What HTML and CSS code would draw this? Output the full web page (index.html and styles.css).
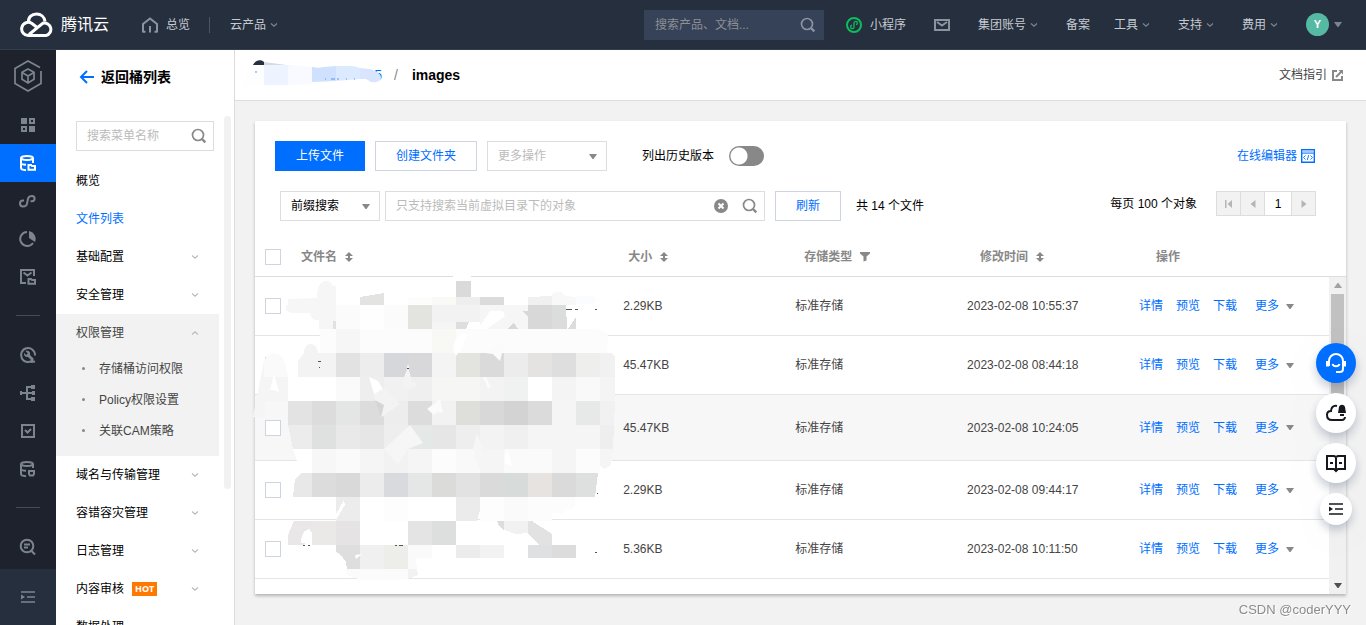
FILE: index.html
```html
<!DOCTYPE html>
<html lang="zh-CN">
<head>
<meta charset="utf-8">
<meta name="viewport" content="width=device-width, initial-scale=1">
<title>images - 文件列表</title>
<link rel="stylesheet" href="styles.css">
</head>
<body>
<svg class="defs" aria-hidden="true">
  <symbol id="chev" viewBox="0 0 16 16"><path d="M5 6.500l3 2.600 3-2.600" fill="none" stroke="currentColor" stroke-width="1.200"/></symbol>
  <symbol id="tri" viewBox="0 0 8 5"><path d="M0 0h8L4.500 5h-1z" fill="currentColor"/></symbol>
  <symbol id="mag" viewBox="0 0 16 16"><circle cx="7" cy="7" r="5.500" fill="none" stroke="currentColor" stroke-width="1.700"/><path d="M11 11l3.300 3.300" stroke="currentColor" stroke-width="2.400"/></symbol>
  <symbol id="sort" viewBox="0 0 8 10"><path d="M4 0l4 4H5v2h3l-4 4-4-4h3V4H0z" fill="currentColor"/></symbol>
  <symbol id="indent" viewBox="0 0 16 16"><path d="M1 3h14M7 8h8M1 13h14" stroke="currentColor" stroke-width="1.600"/><path d="M1 5.500L5 8l-4 2.500z" fill="currentColor"/></symbol>
</svg>

<header class="top">
  <a class="brand" href="#">
    <svg width="34" height="26" viewBox="0 0 34 26" fill="none" stroke="#fff" stroke-width="3"><path d="M9 22.500L23 11.200A6.300 6.300 0 1 1 26 23.500H9A6.600 6.600 0 1 1 12 11.500l4.500 3.500"/><path d="M8.500 10.500C8 5 12 2 16.500 2s8 3 8.500 7.500"/></svg>
    <span>腾讯云</span>
  </a>
  <a class="top-home" href="#">
    <svg width="16" height="16" viewBox="0 0 16 16" fill="none" stroke="#8a939e" stroke-width="2"><path d="M1 15.500V7L8 1.500 15 7v8.500M8 9v6.500M1 14.700h2.500M12.500 14.700H15"/></svg>
    <span>总览</span>
  </a>
  <a class="top-prod" href="#">云产品<svg class="dim" width="16" height="16"><use href="#chev"/></svg></a>
  <div class="top-search">
    <input type="text" aria-label="搜索产品" placeholder="搜索产品、文档...">
    <svg width="16" height="16"><use href="#mag"/></svg>
  </div>
  <nav class="top-nav">
    <a class="pad mini" href="#"><svg width="16" height="16" viewBox="0 0 16 16" fill="none" stroke="#0abf5b"><circle cx="8" cy="8" r="7" stroke-width="2"/><path d="M6 8.200a1.700 1.700 0 1 0 2 1.700V6a1.700 1.700 0 1 1 2 1.700" stroke-width="1.300"/></svg>小程序</a>
    <a class="pad" href="#" aria-label="消息"><svg width="16" height="14" viewBox="0 0 16 14" fill="none" stroke="#8a939e" stroke-width="2"><path d="M1 2h14v10H1zM3 4l5 3.500L13 4"/></svg></a>
    <a href="#">集团账号<svg class="dim" width="16" height="16"><use href="#chev"/></svg></a>
    <a href="#">备案</a>
    <a href="#">工具<svg class="dim" width="16" height="16"><use href="#chev"/></svg></a>
    <a href="#">支持<svg class="dim" width="16" height="16"><use href="#chev"/></svg></a>
    <a href="#">费用<svg class="dim" width="16" height="16"><use href="#chev"/></svg></a>
    <a class="account" href="#"><span class="avatar">Y</span><svg class="dim" width="8" height="5"><use href="#tri"/></svg></a>
  </nav>
</header>

<div class="shell">
  <nav class="rail" aria-label="产品">
    <a class="rail-logo" href="#" aria-label="云产品"><svg width="30" height="34" viewBox="0 0 30 34" fill="none" stroke="#7c858f" stroke-width="1.700"><path d="M27 8.500L15 2 2 9.500v15L15 32l13-7.500V12"/><path d="M15 10l6 3.300v7L15 24l-6-3.700v-7zM9 13.500l6 3.500 6-3.500M15 17v6.500"/></svg></a>
    <a href="#" aria-label="总览"><svg width="16" height="16" viewBox="0 0 16 16" fill="none" stroke="currentColor" stroke-width="2"><path d="M1 1h6v6H1zM9 9h6v6H9z" fill="currentColor" stroke="none"/><path d="M10 2h4v4h-4zM2 10h4v4H2z"/></svg></a>
    <a class="on" href="#" aria-label="对象存储"><svg width="18" height="18" viewBox="0 0 18 18" fill="none" stroke="currentColor" stroke-width="2"><ellipse cx="8" cy="4" rx="6" ry="2"/><path d="M2 4v10c0 1.200 2 2 5 2.300M2 9c0 1 2 1.500 5 1.700M14 4v5M9.500 15.700V11h2.500l1 1h3v3.700z"/></svg></a>
    <a href="#" aria-label="链接"><svg width="18" height="18" viewBox="0 0 18 18" fill="none" stroke="currentColor" stroke-width="2"><path d="M5 8.500H4a3 3 0 0 0 0 6c4.500 0 4-3 4.500-5.500C9 6 9.500 4 13 4a2.600 2.600 0 0 1 0 5.200h-1.500"/></svg></a>
    <a href="#" aria-label="统计"><svg width="18" height="18" viewBox="0 0 18 18" fill="none" stroke="currentColor" stroke-width="2"><path d="M8 2a7 7 0 1 0 6 11"/><path d="M10 1a8 8 0 0 1 6 11l-6-4z" fill="currentColor" stroke="none"/></svg></a>
    <a href="#" aria-label="归档"><svg width="18" height="18" viewBox="0 0 18 18" fill="none" stroke="currentColor" stroke-width="2"><path d="M7 15H2V2h13v6M4.500 4.500l4 3 4-3M9.500 15.700V11h2.500l1 1h3v3.700z"/></svg></a>
    <hr>
    <a href="#" aria-label="工具"><svg width="18" height="18" viewBox="0 0 18 18" fill="none" stroke="currentColor" stroke-width="2"><path d="M14 14A7 7 0 1 1 16 9.500M12 16l4-.5"/><path d="M6.500 5.200l2.300 2-1.500 1.800L5 7c-.5 2.500 1.500 4.500 4 4l4 4 2-2-4-4c1-3-2-5-4.500-3.800z" fill="currentColor" stroke="none"/></svg></a>
    <a href="#" aria-label="拓扑"><svg width="18" height="18" viewBox="0 0 18 18" fill="none" stroke="currentColor" stroke-width="2"><path d="M1 9h15M13 3H8v12h5"/><path d="M12 1h4v4h-4zM12 13h4v4h-4zM13 7h3v4h-3zM1 7h2v4H1z" fill="currentColor" stroke="none"/></svg></a>
    <a href="#" aria-label="任务"><svg width="16" height="16" viewBox="0 0 16 16" fill="none" stroke="currentColor" stroke-width="2"><path d="M2 2h12v12H2zM5 7l2.500 2.500L11 6M5 2h6"/></svg></a>
    <a href="#" aria-label="数据"><svg width="18" height="18" viewBox="0 0 18 18" fill="none" stroke="currentColor" stroke-width="2"><ellipse cx="8" cy="4" rx="6" ry="2"/><path d="M2 4v10c0 1.200 2 2 5 2.300M2 9c0 1 2 1.500 5 1.700M14 4v4M10 11h5v3l-1 1.500h-3L10 14z"/></svg></a>
    <hr>
    <a href="#" aria-label="日志检索"><svg width="18" height="18" viewBox="0 0 18 18" fill="none" stroke="currentColor" stroke-width="2"><circle cx="8" cy="8" r="6.300"/><path d="M12.500 13l3.500 3.500M5 6.500h6M5 9.500h4"/></svg></a>
    <a class="rail-end" href="#" aria-label="展开"><svg width="16" height="16"><use href="#indent"/></svg></a>
  </nav>

  <aside class="side">
    <a class="back" href="#"><svg width="15" height="14" viewBox="0 0 15 14" fill="none" stroke="#006eff" stroke-width="2"><path d="M15 7H2M8 1L2 7l6 6"/></svg>返回桶列表</a>
    <div class="side-scroll">
      <div class="side-main">
        <div class="side-search"><input type="text" aria-label="搜索菜单名称" placeholder="搜索菜单名称"><svg width="16" height="16"><use href="#mag"/></svg></div>
        <ul class="menu">
          <li><a href="#">概览</a></li>
          <li><a class="cur" href="#">文件列表</a></li>
          <li><a href="#">基础配置<svg width="16" height="16"><use href="#chev"/></svg></a></li>
          <li><a href="#">安全管理<svg width="16" height="16"><use href="#chev"/></svg></a></li>
          <li class="open"><a href="#">权限管理<svg class="up" width="16" height="16"><use href="#chev"/></svg></a>
            <ul class="sub">
              <li><a href="#">存储桶访问权限</a></li>
              <li><a href="#">Policy权限设置</a></li>
              <li><a href="#">关联CAM策略</a></li>
            </ul>
          </li>
          <li><a href="#">域名与传输管理<svg width="16" height="16"><use href="#chev"/></svg></a></li>
          <li><a href="#">容错容灾管理<svg width="16" height="16"><use href="#chev"/></svg></a></li>
          <li><a href="#">日志管理<svg width="16" height="16"><use href="#chev"/></svg></a></li>
          <li><a href="#">内容审核<span class="hot">HOT</span><svg width="16" height="16"><use href="#chev"/></svg></a></li>
          <li><a href="#">数据处理<svg width="16" height="16"><use href="#chev"/></svg></a></li>
        </ul>
      </div>
      <div class="side-bar"></div>
    </div>
  </aside>

  <main class="main">
    <div class="crumbs">
      <a class="bucket" href="#">5
        <svg class="bucket-mask" width="140" height="30" viewBox="0 0 140 30">
          <path d="M10 5c2-5 8-6 11-3v3z" fill="#26303f"/><path d="M21 2l30 4H21z" fill="#d6d9df"/><path d="M0 26c-2-11 6-18 20-21l56 3v17z" fill="#fefeff"/>
          <path d="M21 5h24v20H21z" fill="#eef4ff"/><path d="M45 5l24 2v17l-24 1z" fill="#f8faff"/>
          <path d="M69 7c6 1 8 1 12 0l12-1v15l-24 1z" fill="#d0e0ff"/><path d="M93 6h16c4 1 6 1 8 2v11l-24 2z" fill="#dceaff"/><path d="M117 8l10 1c7 2 11 5 11 9-1 4-6 5-10 4l-5-3-6 0z" fill="#d9e5ff"/>
          <path d="M12 12h2M82 19h1M88 19h4M94 19h2M103 19h1M111 19h1" stroke="#4c97ff"/>
        </svg>
      </a>
      <span class="slash">/</span>
      <h1>images</h1>
      <a class="doc" href="#">文档指引<svg width="11" height="11" viewBox="0 0 11 11" fill="none" stroke="#888" stroke-width="2"><path d="M5 1H1v9h9V6"/><path d="M6.500 0H11v4.500z" fill="#888" stroke="none"/><path d="M9.500 1.500L4 7"/></svg></a>
    </div>

    <section class="card">
      <div class="tools">
        <button class="btn primary" type="button">上传文件</button>
        <button class="btn" type="button">创建文件夹</button>
        <span class="sel wide"><select aria-label="更多操作" disabled><option>更多操作</option></select><svg width="8" height="5"><use href="#tri"/></svg></span>
        <label class="hist">列出历史版本<input class="switch" type="checkbox" role="switch"></label>
        <a class="editor" href="#">在线编辑器<svg width="14" height="14" viewBox="0 0 14 14" fill="none" stroke="#006eff"><path d="M.7.7h12.600v12.600H.7z" stroke-width="1.400"/><path d="M1.400 2.500h11.200" stroke="#a3c9ff" stroke-width="2"/><path d="M1 4.200h12M4.500 6.500l-2 2 2 2M9.500 6.500l2 2-2 2M7.700 6l-1.400 5" stroke-width=".9"/></svg></a>
      </div>
      <div class="tools second">
        <span class="sel"><select aria-label="搜索方式"><option>前缀搜索</option></select><svg width="8" height="5"><use href="#tri"/></svg></span>
        <div class="find">
          <input type="text" aria-label="搜索对象" placeholder="只支持搜索当前虚拟目录下的对象">
          <button type="button" aria-label="清除"><svg width="14" height="14" viewBox="0 0 14 14"><circle cx="7" cy="7" r="7" fill="#888"/><path d="M4.500 4.500l5 5M9.500 4.500l-5 5" stroke="#fff" stroke-width="2"/></svg></button>
          <button type="button" aria-label="搜索"><svg width="16" height="16"><use href="#mag"/></svg></button>
        </div>
        <button class="btn refresh" type="button">刷新</button>
        <span class="total">共 14 个文件</span>
        <div class="pages">
          <span>每页 100 个对象</span>
          <div class="pager">
            <button type="button" aria-label="首页"><svg width="8" height="8" viewBox="0 0 8 8"><path d="M0 0h1.500v8H0zM7 0v8L2.500 4z" fill="#b5b5b5"/></svg></button>
            <button type="button" aria-label="上一页"><svg width="8" height="8" viewBox="0 0 8 8"><path d="M6.500 0v8L1.500 4z" fill="#b5b5b5"/></svg></button>
            <input type="text" aria-label="页码" value="1">
            <button type="button" aria-label="下一页"><svg width="8" height="8" viewBox="0 0 8 8"><path d="M1.500 0v8l5-4z" fill="#b5b5b5"/></svg></button>
          </div>
        </div>
      </div>

      <table class="grid head">
        <colgroup><col class="c-check"><col class="c-name"><col><col><col><col class="c-ops"></colgroup>
        <thead><tr>
          <th><input type="checkbox" aria-label="全选"></th>
          <th>文件名<svg width="8" height="10"><use href="#sort"/></svg></th>
          <th>大小<svg width="8" height="10"><use href="#sort"/></svg></th>
          <th>存储类型<svg width="10" height="10" viewBox="0 0 10 10"><path d="M0 0h10v1.500L6.500 4.500v4l-3 1v-5L0 1.500z" fill="currentColor"/></svg></th>
          <th>修改时间<svg width="8" height="10"><use href="#sort"/></svg></th>
          <th>操作</th>
        </tr></thead>
      </table>
      <div class="body">
        <div class="rows">
          <table class="grid">
            <colgroup><col class="c-check"><col class="c-name"><col><col><col><col class="c-ops"></colgroup>
            <tbody>
              <tr><td><input type="checkbox" aria-label="选择"></td><td></td><td>2.29KB</td><td>标准存储</td><td>2023-02-08 10:55:37</td><td><div class="ops"><a href="#">详情</a><a href="#">预览</a><a href="#">下载</a><a class="more" href="#">更多<svg width="8" height="5"><use href="#tri"/></svg></a></div></td></tr>
              <tr><td><input type="checkbox" aria-label="选择"></td><td></td><td>45.47KB</td><td>标准存储</td><td>2023-02-08 08:44:18</td><td><div class="ops"><a href="#">详情</a><a href="#">预览</a><a href="#">下载</a><a class="more" href="#">更多<svg width="8" height="5"><use href="#tri"/></svg></a></div></td></tr>
              <tr class="hover"><td><input type="checkbox" aria-label="选择"></td><td></td><td>45.47KB</td><td>标准存储</td><td>2023-02-08 10:24:05</td><td><div class="ops"><a href="#">详情</a><a href="#">预览</a><a href="#">下载</a><a class="more" href="#">更多<svg width="8" height="5"><use href="#tri"/></svg></a></div></td></tr>
              <tr><td><input type="checkbox" aria-label="选择"></td><td></td><td>2.29KB</td><td>标准存储</td><td>2023-02-08 09:44:17</td><td><div class="ops"><a href="#">详情</a><a href="#">预览</a><a href="#">下载</a><a class="more" href="#">更多<svg width="8" height="5"><use href="#tri"/></svg></a></div></td></tr>
              <tr><td><input type="checkbox" aria-label="选择"></td><td></td><td>5.36KB</td><td>标准存储</td><td>2023-02-08 10:11:50</td><td><div class="ops"><a href="#">详情</a><a href="#">预览</a><a href="#">下载</a><a class="more" href="#">更多<svg width="8" height="5"><use href="#tri"/></svg></a></div></td></tr>
            </tbody>
          </table>
        </div>
        <div class="bar"><svg width="8" height="5" class="flip"><use href="#tri"/></svg><div class="thumb"></div><svg class="down" width="8" height="5"><use href="#tri"/></svg></div>

        <svg class="mask" width="380" height="320" viewBox="0 0 380 320" shape-rendering="crispEdges">
          <!-- row 1 -->
          <path d="M203 4h18v8h-18z" fill="#fff"/>
          <path d="M206 11h15v16h-15z" fill="#dadada"/>
          <path d="M110 27l24-4v12h-24z" fill="#e3e3e1"/><path d="M158 27h24v8h-24z" fill="#fdfdfb"/><path d="M182 27h24v8h-24z" fill="#f9f9f6"/><path d="M206 27h24v8h-24z" fill="#eee"/><path d="M230 27h24v8h-24z" fill="#dbdbdb"/><path d="M278 27l24-1v9h-24z" fill="#f0f0f0"/><path d="M302 24c6-4 10-3 13 2l11 1v8h-24z" fill="#f8f8f8"/><path d="M326 26h18c3 2 2 6 0 8h-18z" fill="#fafcff"/>
          <g shape-rendering="auto"><path d="M67 27c0-9 3-15 8-16 5 0 7 2 7 5h4v43H69v-9c-5 1-8-2-9-7H42c-5-1-7-4-6-8h2v-6l29-1z" fill="#f6f6f6"/></g>
          <path d="M83 51h5v8h-5z" fill="#e2e2e2"/>
          <path d="M86 35h24v24H86zM134 35h24v24h-24z" fill="#fbfbfb"/><path d="M110 35h24v24h-24z" fill="#fefefe"/><path d="M158 35h24v24h-24z" fill="#e3e3e0"/><path d="M182 35h48v17h-48z" fill="#f2f2f2"/><path d="M182 52h24v7h-24z" fill="#f5f5f5"/><path d="M206 52h13l-3 7h-10z" fill="#dedede"/><path d="M230 35h48v24h-48z" fill="#f6f6f6"/><path d="M278 35h24v24h-24z" fill="#d8d8d8"/><path d="M302 35h14l1 24h-15z" fill="#dbdddd"/><path d="M326 47v12h-8z" fill="#dcdcdc"/>
          <path d="M272 41h6v5zM257 59l7-6 4 6z" fill="#d8d8d8"/><path d="M240 41h13l2 5-18 13h-9z" fill="#fff"/>
          <!-- row 2 -->
          <path d="M70 59h16v24H70zM110 59h72v24h-72zM206 59h140l12 4-1 20H206z" fill="#fcfcfc"/><path d="M86 59h24v24H86z" fill="#f6f6f6"/><path d="M182 59h24v24h-24z" fill="#f8f8f5"/>
          <g shape-rendering="auto"><path d="M3 147L14 91c5-10 16-10 20 0l4 16v24H15v14l-2 2z" fill="#f5f5f5"/><path d="M14 107V91c5-10 16-10 20 0l4 16z" fill="#fafafa"/><path d="M20 120l4-16 5 18-5-2z" fill="#fff"/><path d="M48 107v-16l6-8c0-12 13-12 14 0h18v24z" fill="#f3f3f3"/></g>
          <path d="M86 83h24v24H86z" fill="#e2e2e2"/><path d="M110 83h24v24h-24z" fill="#ededed"/><path d="M134 83h24v24h-24z" fill="#d6d7da"/><path d="M158 83h24v24h-24z" fill="#d8d8da"/><path d="M182 83h24v24h-24z" fill="#f4f4f4"/><path d="M206 83h24v24h-24z" fill="#e3e4df"/><path d="M230 83h24v24h-24z" fill="#dadada"/><path d="M254 83h24v24h-24z" fill="#ececec"/><path d="M278 83h24v24h-24z" fill="#e4e3e2"/><path d="M302 83h24v24h-24z" fill="#dedede"/><path d="M326 83h24v24h-24z" fill="#eeeeed"/><path d="M350 83h11l4 4v20h-15z" fill="#f1f1f1"/>
          <path d="M38 107h48v24H38zM278 107h24v24h-24z" fill="#fff"/><path d="M86 107h24v24H86z" fill="#fafafa"/><path d="M110 107h24v24h-24z" fill="#eee"/><path d="M134 107h24v24h-24z" fill="#f1f1f1"/><path d="M158 107h24v24h-24z" fill="#efefef"/><path d="M182 107h48v24h-48z" fill="#f6f6f5"/><path d="M230 107h24v24h-24z" fill="#f3f3f3"/><path d="M254 107h24v24h-24z" fill="#eff2f1"/><path d="M302 107h24v24h-24zM350 107h15v24h-15z" fill="#f4f4f4"/><path d="M326 107h24v24h-24z" fill="#f9f9f9"/>
          <!-- row 3 -->
          <path d="M38 131h24v24H38z" fill="#e3e3e3"/><path d="M62 131h24v24H62zM110 131h24v24h-24zM158 131h24v24h-24z" fill="#dcdcdc"/><path d="M86 131h24v24H86z" fill="#e3e6e5"/><path d="M134 131h24v24h-24z" fill="#ededed"/><path d="M182 131h24v24h-24z" fill="#f2f2f2"/><path d="M206 131h24v24h-24z" fill="#dededb"/><path d="M230 131h24v24h-24z" fill="#d8d8d9"/><path d="M254 131h24v24h-24z" fill="#d3d3d3"/><path d="M278 131h24v24h-24z" fill="#dbdbdb"/><path d="M302 131h24v24h-24z" fill="#f5f5f5"/><path d="M326 131h24v24h-24z" fill="#e7e9e8"/><path d="M350 131h15l-1 24h-14z" fill="#f1f1f1"/>
          <path d="M38 155h24v24H43z" fill="#ececec"/><path d="M62 155h24v24H62z" fill="#dee1e0"/><path d="M86 155h24v24H86z" fill="#e9e9e9"/><path d="M110 155h24v24h-24z" fill="#e6e6e6"/><path d="M134 155h24v24h-24z" fill="#eee"/><path d="M158 155h24v24h-24z" fill="#e4e8e6"/><path d="M182 155h24v24h-24z" fill="#e6e6e6"/><path d="M206 155h24v24h-24z" fill="#eee"/><path d="M230 155h24v24h-24z" fill="#f3f3f3"/><path d="M254 155h24v24h-24z" fill="#f0f0f0"/><path d="M278 155h72v24h-72z" fill="#f5f5f5"/><path d="M350 155h14l-1 24h-13z" fill="#eee"/>
          <path d="M43 179h19v24H51z" fill="#fff"/><path d="M62 179h24v24H62z" fill="#f7f7f7"/><path d="M86 179h24v24H86zM254 179h48v24h-48z" fill="#fafafa"/><path d="M110 179h24v24h-24zM158 179h24v24h-24z" fill="#f5f5f5"/><path d="M134 179h24v24h-24z" fill="#f2f2f2"/><path d="M182 179h24v24h-24zM326 179h24v24h-24z" fill="#fcfcfc"/><path d="M206 179h24v24h-24z" fill="#f9f9f9"/><path d="M230 179h24v24h-24zM302 179h24v24h-24zM350 179h13l-2 16-6 4-5-3z" fill="#f5f5f5"/>
          <!-- row 4 -->
          <path d="M43 227l2-18 6-6h11v24z" fill="#e8e8e8"/><path d="M62 203h24v24H62z" fill="#dcdcdc"/><path d="M86 203h24v24H86z" fill="#d9d9d9"/><path d="M110 203h24v24h-24z" fill="#ececec"/><path d="M134 203h24v24h-24z" fill="#d8dadd"/><path d="M158 203h24v24h-24z" fill="#e4e7e6"/><path d="M182 203h24v24h-24z" fill="#dbdbd9"/><path d="M206 203h24v24h-24z" fill="#e2e2e2"/><path d="M230 203h24v24h-24zM302 203h24v24h-24z" fill="#dadada"/><path d="M254 203h24v24h-24z" fill="#d7dbd9"/><path d="M278 203h24v24h-24z" fill="#e6e3e1"/><path d="M326 203h22l-3 24h-19z" fill="#dee0df"/>
          <path d="M86 227h24v24H86z" fill="#ececec"/><path d="M110 227h24v24h-24zM158 227h48v24h-48z" fill="#fff"/><path d="M134 227h24v24h-24zM230 227h24v24h-24z" fill="#fdfdfd"/><path d="M206 227h24v13l-3 11h-21z" fill="#ebebeb"/><path d="M254 227h24v24h-24z" fill="#fafafa"/><path d="M278 227h47v10l-9 4-5 3-9-1v8h-24z" fill="#fcfcfc"/>
          <path d="M86 244l8-14 1 5-9 15zM76 253l8-1-7 12z" fill="#fff"/>
          <!-- row 5 -->
          <path d="M38 275v-10l6-14h18v10l-8 14z" fill="#e9e7e8"/><path d="M62 251h24v24H62z" fill="#ebe9e7"/><path d="M86 251h24v24H86z" fill="#e6e3e5"/><path d="M110 251h48v24h-48zM206 251h41v24h-41z" fill="#fff"/><path d="M158 251h24v24h-24z" fill="#e4e4e4"/><path d="M182 251h24v24h-24z" fill="#dcdfde"/><path d="M247 251h7v9l-5-4z" fill="#ddd"/><path d="M254 251h24v12l-12 1-12-4z" fill="#f1f1f1"/><path d="M278 251h4l20 13v11h-12l-12-11z" fill="#e2e2e2"/>
          <path d="M51 273c0-10 4-14 9-14 2 5 0 10-1 14z" fill="#fff"/>
          <path d="M86 275h24v24H97l-1-7-6-8-4-2z" fill="#dedede"/><path d="M110 275h24v24h-24z" fill="#f0f0f0"/><path d="M134 275h24v24h-24z" fill="#ededea"/><path d="M158 275h24v13h-16l1 11h-9z" fill="#fafafa"/><path d="M206 275h24v13h-24z" fill="#ececec"/><path d="M230 275h24v13h-24z" fill="#f2f2f2"/><path d="M278 275h24v13h-24z" fill="#dfe0e2"/><path d="M302 275h24v13h-24z" fill="#dcdcdd"/>
          <path d="M95 299h63v10l-20 1h-26l-14-4z" fill="#fbfbfb"/><path d="M158 299h9l1 6-10 4z" fill="#f2f2f2"/>
          <!-- loose slivers -->
          <g shape-rendering="auto">
            <path d="M119 107l9 4 7 11-11 2zM205 70l6-6 6 0-4 12-7 10-3-6zM105 285l7-1-6 5zM255 186l3-7 4 17-7-2zM157 98l1-4 1 4z" fill="#fff"/>
            <path d="M235 83l20-12-5 20-7-7zM233 107h3l5 10-3 2zM177 139l13-10 3 14-6-1-3 3z" fill="#fbfbfb"/>
            <path d="M151 115l7-18 4 14 6 4-8 5zM123 125l11-7 16 16-18 13z" fill="#f3f3f3"/>
            <path d="M125 130l9 5-3 12z" fill="#d5d5d5"/>
            <path d="M134 179l26-24 13 18-15 6-10 16zM223 179l4-16 5 14-2 24z" fill="#f6f6f6"/>
          </g>
          <path d="M316 39h6M325 39h3M345 39h2M53 275h2M58 275h2M145 275h2M149 275h4M347 223h1M345 282h2M68 91h3M69 97h1M157 98h2" stroke="#555" stroke-width="1"/>
        </svg>
      </div>
    </section>
  </main>
</div>

<div class="float">
  <button class="blue" type="button" aria-label="客服"><svg width="22" height="22" viewBox="0 0 22 22" fill="none" stroke="#fff" stroke-width="2"><path d="M4 14V9a7 7 0 0 1 14 0v8c0 2-1 3-3 3h-4"/><path d="M2.500 9v5.500M19.500 9v5.500" stroke-width="3"/><path d="M7.500 12c1 3 6 3 7 0"/></svg></button>
  <button type="button" aria-label="动态"><svg width="22" height="22" viewBox="0 0 22 22" fill="none" stroke="#16181d" stroke-width="2"><path d="M12 4C8 3 6 6 6 9c-3 0-4 2-4 4 0 3 2 5 5 5h10c2 0 3-2 3-3"/><path d="M13 11l1-6c1-3 5-3 6 0l1 6zM15 12h4v2h-4z" fill="#16181d" stroke="none"/></svg></button>
  <button type="button" aria-label="文档"><svg width="22" height="22" viewBox="0 0 22 22" fill="none" stroke="#16181d" stroke-width="2"><path d="M11 5l-2-1H2v13h7l2 2 2-2h7V4h-7zv14M5 11h3M14 11h3"/></svg></button>
  <button class="small" type="button" aria-label="收起"><svg width="16" height="16"><use href="#indent"/></svg></button>
</div>
<div class="credit">CSDN @coderYYY</div>
</body>
</html>
```
FILE: styles.css
```css
* { box-sizing: border-box; }
body {
  margin: 0;
  height: 100vh;
  display: flex;
  flex-direction: column;
  overflow: hidden;
  font: 12px/18px "Liberation Sans", "Noto Sans CJK SC", sans-serif;
  color: #000;
  background: #f2f2f2;
}
a { color: inherit; text-decoration: none; }
ul { list-style: none; margin: 0; padding: 0; }
button, input, select { font: inherit; color: inherit; margin: 0; padding: 0; border: 0; border-radius: 0; background: none; }
button { display: flex; align-items: center; justify-content: center; }
input { min-width: 0; outline: 0; }
input::placeholder { color: #bbb; opacity: 1; }
svg { flex: none; display: block; }
.defs { position: absolute; width: 0; height: 0; }

/* top bar */
.top {
  flex: none;
  display: flex;
  align-items: center;
  height: 50px;
  padding: 0 24px 0 20px;
  background: #262f3e;
  border-bottom: 1px solid #343d4b;
  color: #c5cad1;
}
.top a { display: flex; align-items: center; }
.dim { color: #7c858f; }
.brand { gap: 7px; font-size: 16px; color: #fff; }
.brand svg { width: 34px; }
.top-home { gap: 8px; margin-left: 33px; }
.top-prod { margin-left: 19px; padding-left: 20px; border-left: 1px solid #4b5563; line-height: 16px; }
.top-search {
  display: flex;
  align-items: center;
  width: 180px;
  height: 30px;
  margin-left: auto;
  padding: 0 8px 0 11px;
  background: #354258;
  color: #8a939e;
}
.top-search input { flex: 1; }
.top-search input::placeholder { color: #8d8f94; }
.top-nav { display: flex; align-items: center; gap: 24px; margin-left: 22px; }
.top-nav .pad { padding-right: 4px; }
.top-nav .mini { gap: 8px; }
.account { gap: 5px; }
.avatar {
  width: 23px;
  height: 23px;
  border-radius: 50%;
  background: #55b9a4;
  color: #fff;
  font-weight: bold;
  font-size: 11px;
  line-height: 23px;
  text-align: center;
}

.shell { flex: 1; min-height: 0; display: flex; }

/* icon rail */
.rail { flex: none; width: 56px; display: flex; flex-direction: column; background: #1e222d; color: #7c858f; }
.rail a { flex: none; height: 38px; display: flex; align-items: center; justify-content: center; }
.rail .rail-logo { height: 56px; padding-bottom: 4px; }
.rail .on { background: #006eff; color: #fff; }
.rail hr { flex: none; width: 24px; height: 1px; margin: 19px auto 20px; border: 0; background: #454b57; }
.rail .rail-end { height: 56px; margin-top: auto; background: #262f3e; }

/* product menu */
.side { flex: none; width: 179px; display: flex; flex-direction: column; background: #fff; border-right: 1px solid #dcdcdc; }
.back { flex: none; display: flex; align-items: center; gap: 7px; height: 66px; padding: 0 0 12px 23px; font-size: 14px; font-weight: bold; }
.side-scroll { flex: 1; min-height: 0; display: flex; gap: 5px; overflow: hidden; }
.side-main { flex: 1; max-width: 163px; padding-top: 5px; }
.side-bar { flex: none; width: 7px; height: 373px; border-radius: 4px; background: #f1f1f1; }
.side-search { display: flex; align-items: center; height: 30px; margin: 0 5px 11px 20px; padding: 0 6px 0 10px; border: 1px solid #ddd; color: #888; }
.side-search input { flex: 1; }
.menu a { display: flex; align-items: center; height: 38px; padding: 0 16px 0 20px; }
.menu svg { margin-left: auto; color: #bbb; }
.menu .up { transform: rotate(180deg); }
.menu .cur { color: #006eff; }
.open { padding-bottom: 10px; background: #f2f2f2; color: #444; }
.menu .sub { padding-top: 1px; }
.menu .sub a { height: 31px; padding-left: 26px; gap: 14px; }
.sub a::before { content: ""; width: 3px; height: 3px; border-radius: 50%; background: #888; }
.hot { margin-left: 8px; padding: 0 3px; background: #ff7800; color: #fff; font: bold 9px/14px "Open Sans", sans-serif; }

/* content */
.main { flex: 1; min-width: 0; display: flex; flex-direction: column; }
.crumbs { flex: none; display: flex; align-items: center; height: 51px; padding: 0 23px 0 20px; background: #fff; border-bottom: 1px solid #dcdcdc; }
.bucket { position: relative; width: 127px; text-align: right; color: #006eff; font-size: 14px; }
.bucket-mask { position: absolute; left: -12px; top: -6px; }
.slash { margin: 0 14px 0 12px; font-size: 14px; color: #888; }
.crumbs h1 { margin: 0; font-size: 14px; line-height: 18px; }
.doc { display: flex; align-items: center; gap: 5px; margin-left: auto; color: #444; }

.card { flex: 1; min-height: 0; display: flex; flex-direction: column; margin: 20px 20px 31px; background: #fff; box-shadow: 0 2px 3px rgba(0, 0, 0, .25); }
.tools { flex: none; display: flex; align-items: center; padding: 20px 31px 0 20px; }
.second { padding: 20px 30px 16px 25px; }
.btn { flex: none; width: 102px; height: 30px; margin-right: 10px; border: 1px solid #cfd5de; color: #006eff; background: #fff; }
.primary { width: 90px; border-color: #006eff; background: #006eff; color: #fff; }
.refresh { width: 66px; margin: 0 15px 0 10px; }
.sel { flex: none; display: grid; align-items: center; width: 100px; height: 30px; border: 1px solid #ddd; color: #888; }
.sel > * { grid-area: 1 / 1; }
.sel select { width: 100%; height: 28px; padding-left: 10px; appearance: none; color: #000; opacity: 1; }
.sel select:disabled { color: #bbb; }
.sel svg { justify-self: end; margin-right: 9px; pointer-events: none; }
.wide { width: 120px; }
.hist { display: flex; align-items: center; gap: 15px; margin-left: 35px; }
.switch { appearance: none; width: 35px; height: 20px; border-radius: 10px; background: radial-gradient(circle at 10px 10px, #fff 8px, #888 9px); }
.editor { display: flex; align-items: center; gap: 4px; margin-left: auto; color: #006eff; }
.find { flex: 0 1 380px; display: flex; align-items: center; gap: 14px; height: 30px; margin-left: 5px; padding: 0 6px 0 10px; border: 1px solid #ddd; color: #888; }
.find input { flex: 1; }
.total { white-space: nowrap; }
.pages { display: flex; align-items: center; align-self: flex-start; gap: 19px; margin-left: auto; white-space: nowrap; }
.pager { display: flex; width: 100px; height: 25px; border: 1px solid #ddd; }
.pager button { flex: none; width: 24px; background: #f2f2f2; border-right: 1px solid #ddd; }
.pager input { flex: 1; text-align: center; }
.pager button:last-child { border-right: 0; border-left: 1px solid #ddd; }

.grid { width: 100%; table-layout: fixed; border-collapse: separate; border-spacing: 0; }
.c-check { width: 36px; }
.c-name { width: 30%; }
.c-ops { width: 200px; }
.grid th { height: 40px; padding: 0 10px; text-align: left; color: #888; border-bottom: 1px solid #ddd; white-space: nowrap; }
.grid th svg { display: inline-block; margin-left: 8px; vertical-align: -1px; }
.head { flex: none; }
.grid td { height: 59px; padding: 0 10px; color: #444; border-bottom: 1px solid #e5e5e5; white-space: nowrap; }
.grid .hover td { height: 66px; background: #f7f7f7; }
.grid input { appearance: none; display: block; width: 16px; height: 16px; border: 1px solid #cfd5de; background: #fff; }
.ops { display: flex; align-items: center; gap: 13px; color: #006eff; }
.more { display: flex; align-items: center; gap: 7px; margin-left: 5px; }
.more svg { color: #888; }
.body { position: relative; flex: 1; min-height: 0; display: flex; }
.rows { flex: 1; overflow: hidden; }
.bar { flex: none; width: 17px; display: flex; flex-direction: column; align-items: center; padding: 6px 0; background: #f1f1f1; color: #505050; }
.flip { transform: rotate(180deg); color: #a3a3a3; }
.thumb { width: 13px; height: 120px; margin-top: 6px; background: #c1c1c1; }
.down { margin-top: auto; }
.mask { position: absolute; left: -5px; top: -7px; pointer-events: none; }

/* floating helpers */
.float { position: fixed; right: 10px; bottom: 100px; display: flex; flex-direction: column; align-items: center; gap: 10px; }
.float button { width: 40px; height: 40px; border-radius: 50%; background: #fff; color: #16181d; box-shadow: 0 5px 10px rgba(30, 50, 90, .25), 0 10px 60px rgba(0, 0, 0, .05); }
.float .blue { background: #006eff; }
.float .small { width: 32px; height: 32px; }
.credit { position: fixed; right: 15px; bottom: 6px; font-size: 13px; color: #8b8b8b; text-shadow: 1px 1px 0 #fff; }
```
